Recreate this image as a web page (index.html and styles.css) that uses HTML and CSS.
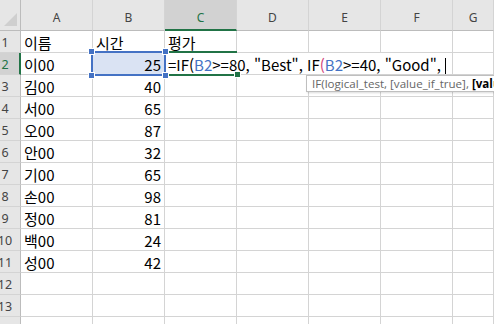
FILE: index.html
```html
<!DOCTYPE html>
<html lang="ko">

<head>
    <meta charset="UTF-8">
    <meta name="viewport" content="width=device-width, initial-scale=1.0">
    <title>Sheet1</title>
    <link rel="stylesheet" href="styles.css">
</head>

<body>
    <div class="sheet">
        <!-- column headers -->
        <div class="corner">
            <svg class="corner-mark" width="20" height="30" viewBox="0 0 20 30">
                <polygon points="17,13 17,26 4,26" fill="#cfcfcf" />
            </svg>
        </div>
        <div class="col-head">A</div>
        <div class="col-head">B</div>
        <div class="col-head active">C</div>
        <div class="col-head">D</div>
        <div class="col-head">E</div>
        <div class="col-head">F</div>
        <div class="col-head">G</div>

        <!-- row 1 -->
        <div class="row-head"><span>1</span></div>
        <div class="cell">이름</div>
        <div class="cell">시간</div>
        <div class="cell">평가</div>
        <div class="cell"></div>
        <div class="cell"></div>
        <div class="cell"></div>
        <div class="cell"></div>

        <!-- row 2 (editing) -->
        <div class="row-head active"><span>2</span></div>
        <div class="cell">이00</div>
        <div class="cell num ref">25
            <div class="ref-box">
                <i class="handle tl"></i><i class="handle tr"></i>
                <i class="handle bl"></i><i class="handle br"></i>
            </div>
        </div>
        <div class="cell editing">
            <div class="edit-text">=IF(<span class="r1">B2</span>&gt;=80, "Best", IF<span class="p2">(</span><span class="r1">B2</span>&gt;=40, "Good", <span class="caret"></span></div>
            <div class="edit-box"><i class="fill-handle"></i></div>
            <div class="tip">IF(logical_test, [value_if_true], <b>[value_if_false]</b>)</div>
        </div>
        <div class="cell"></div>
        <div class="cell"></div>
        <div class="cell"></div>
        <div class="cell"></div>

        <div class="row-head"><span>3</span></div>
        <div class="cell">김00</div>
        <div class="cell num">40</div>
        <div class="cell"></div><div class="cell"></div><div class="cell"></div><div class="cell"></div><div class="cell"></div>

        <div class="row-head"><span>4</span></div>
        <div class="cell">서00</div>
        <div class="cell num">65</div>
        <div class="cell"></div><div class="cell"></div><div class="cell"></div><div class="cell"></div><div class="cell"></div>

        <div class="row-head"><span>5</span></div>
        <div class="cell">오00</div>
        <div class="cell num">87</div>
        <div class="cell"></div><div class="cell"></div><div class="cell"></div><div class="cell"></div><div class="cell"></div>

        <div class="row-head"><span>6</span></div>
        <div class="cell">안00</div>
        <div class="cell num">32</div>
        <div class="cell"></div><div class="cell"></div><div class="cell"></div><div class="cell"></div><div class="cell"></div>

        <div class="row-head"><span>7</span></div>
        <div class="cell">기00</div>
        <div class="cell num">65</div>
        <div class="cell"></div><div class="cell"></div><div class="cell"></div><div class="cell"></div><div class="cell"></div>

        <div class="row-head"><span>8</span></div>
        <div class="cell">손00</div>
        <div class="cell num">98</div>
        <div class="cell"></div><div class="cell"></div><div class="cell"></div><div class="cell"></div><div class="cell"></div>

        <div class="row-head"><span>9</span></div>
        <div class="cell">정00</div>
        <div class="cell num">81</div>
        <div class="cell"></div><div class="cell"></div><div class="cell"></div><div class="cell"></div><div class="cell"></div>

        <div class="row-head"><span>10</span></div>
        <div class="cell">백00</div>
        <div class="cell num">24</div>
        <div class="cell"></div><div class="cell"></div><div class="cell"></div><div class="cell"></div><div class="cell"></div>

        <div class="row-head"><span>11</span></div>
        <div class="cell">성00</div>
        <div class="cell num">42</div>
        <div class="cell"></div><div class="cell"></div><div class="cell"></div><div class="cell"></div><div class="cell"></div>

        <div class="row-head"><span>12</span></div>
        <div class="cell"></div><div class="cell"></div><div class="cell"></div><div class="cell"></div><div class="cell"></div><div class="cell"></div><div class="cell"></div>

        <div class="row-head"><span>13</span></div>
        <div class="cell"></div><div class="cell"></div><div class="cell"></div><div class="cell"></div><div class="cell"></div><div class="cell"></div><div class="cell"></div>

        <div class="row-head"><span>14</span></div>
        <div class="cell"></div><div class="cell"></div><div class="cell"></div><div class="cell"></div><div class="cell"></div><div class="cell"></div><div class="cell"></div>
    </div>
</body>

</html>
```

FILE: styles.css
```css
body {
    margin: 0;
    background: #ffffff;
    overflow: hidden;
    font-family: "Noto Sans CJK KR", "Noto Sans", sans-serif;
}

.sheet {
    display: grid;
    grid-template-columns: 21px repeat(6, 72px) 1fr;
    grid-template-rows: 31px;
    grid-auto-rows: 22px;
    width: 494px;
    height: 324px;
    overflow: hidden;
}

/* headers */
.corner,
.col-head,
.row-head {
    background: #e6e6e6;
    color: #444444;
    font-family: "Noto Sans", sans-serif;
    font-size: 12px;
    box-sizing: border-box;
}

.corner {
    border-right: 1px solid #bcbcbc;
    border-bottom: 1px solid #bcbcbc;
}

.corner-mark {
    display: block;
}

.col-head {
    display: flex;
    align-items: center;
    justify-content: center;
    padding-top: 4px;
    border-right: 1px solid #d4d4d4;
    border-bottom: 1px solid #bcbcbc;
}

.col-head.active {
    background: #d2d2d2;
    color: #217346;
    border-bottom: 2px solid #217346;
    padding-top: 5px;
}

.row-head {
    overflow: hidden;
    border-right: 1px solid #bcbcbc;
    border-bottom: 1px solid #d4d4d4;
    line-height: 21px;
    font-size: 12.5px;
}

.row-head span {
    display: block;
    width: 30px;
    margin-left: -10px;
    text-align: center;
    padding-top: 1px;
}

.row-head.active {
    background: #d2d2d2;
    color: #217346;
    border-right: 2px solid #217346;
}

/* cells */
.cell {
    position: relative;
    box-sizing: border-box;
    border-right: 1px solid #d4d4d4;
    border-bottom: 1px solid #d4d4d4;
    padding: 0 3px;
    font-size: 15px;
    line-height: 23px;
    color: #000000;
    white-space: nowrap;
}

.cell.num {
    text-align: right;
}

.cell.ref {
    background: #dae3f3;
}

.ref-box {
    position: absolute;
    left: -2px;
    top: -2px;
    width: 75px;
    height: 25px;
    box-sizing: border-box;
    border: 2px solid #4472c4;
    z-index: 3;
}

.handle {
    position: absolute;
    width: 5px;
    height: 5px;
    background: #4472c4;
    border: 1px solid #ffffff;
}

.handle.tl { left: -5px; top: -5px; }
.handle.tr { right: -5px; top: -5px; }
.handle.bl { left: -5px; bottom: -5px; }
.handle.br { right: -5px; bottom: -5px; }

/* cell being edited */
.edit-text {
    position: absolute;
    left: 0;
    top: 0;
    bottom: 0;
    width: 282px;
    padding-left: 3px;
    background: #ffffff;
    z-index: 2;
}

.r1 {
    color: #4472c4;
}

.p2 {
    color: #d1437a;
}

.caret {
    display: inline-block;
    width: 1px;
    height: 16px;
    background: #000000;
    vertical-align: -3px;
}

.edit-box {
    position: absolute;
    left: 0;
    top: -2px;
    width: 72px;
    height: 25px;
    box-sizing: border-box;
    border-top: 2px solid #217346;
    border-bottom: 2px solid #217346;
    z-index: 2;
}

.fill-handle {
    position: absolute;
    right: -4px;
    bottom: -4px;
    width: 5px;
    height: 5px;
    background: #217346;
    border: 1px solid #ffffff;
}

.tip {
    position: absolute;
    left: 141px;
    top: 22px;
    height: 15px;
    padding: 0 5px;
    background: #ffffff;
    border: 1px solid #bfbfbf;
    box-shadow: 1px 1px 2px rgba(0, 0, 0, 0.15);
    font-family: "Open Sans", sans-serif;
    font-size: 11.6px;
    line-height: 15px;
    color: #666666;
    z-index: 4;
}

.tip b {
    color: #000000;
}
```
